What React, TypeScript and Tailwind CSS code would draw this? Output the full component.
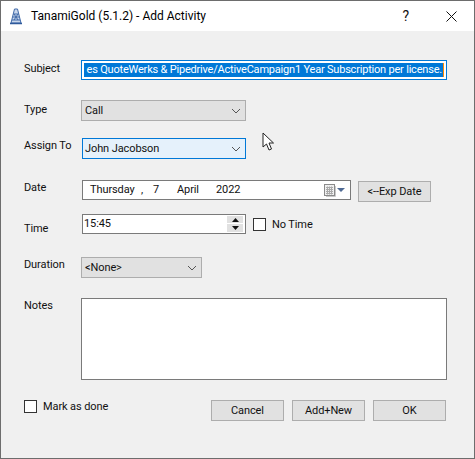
import React from "react";

const Chevron = () => (
  <svg width="10" height="6" viewBox="0 0 10 6" className="shrink-0">
    <path d="M1 1 L5 5 L9 1" fill="none" stroke="#555" strokeWidth="1" />
  </svg>
);

const Label = ({ children, pt }: { children: React.ReactNode; pt: string }) => (
  <div className={`w-[57px] shrink-0 leading-[16px] text-[#111] ${pt}`}>{children}</div>
);

const Btn = ({ children }: { children: React.ReactNode }) => (
  <div className="flex h-[21px] w-[73px] items-center justify-center border border-[#adadad] bg-[#e1e1e1] pt-[2px] text-[#111]">
    {children}
  </div>
);

const Check = () => <div className="h-[13px] w-[13px] shrink-0 border border-[#333] bg-white" />;

export default function App() {
  return (
    <div
      className="relative flex h-[459px] w-[475px] flex-col border border-[#6d6d6d] bg-[#f0f0f0] text-[11px] tracking-[-0.1px]"
      style={{ fontFamily: 'Roboto, "Noto Sans", sans-serif' }}
    >
      <div className="flex h-[30px] shrink-0 items-center bg-white pl-[9px] tracking-normal">
        <svg width="12" height="17" viewBox="0 0 12 17" className="shrink-0">
          <path d="M4.5 1 H7.5 L11 15 H1 Z" fill="#c9d7ec" stroke="#3f69a8" strokeWidth="1" />
          <path d="M3.5 6 H8.5 M2.8 9 H9.2 M2 12 H10 M4 6 L8 12 M8 6 L4 12" stroke="#3f69a8" strokeWidth="1" fill="none" />
          <path d="M0 15.5 H12" stroke="#2f5a9c" strokeWidth="1.5" />
        </svg>
        <span className="ml-[9px] text-[12px] text-black">TanamiGold (5.1.2) - Add Activity</span>
        <span className="ml-auto mr-[37px] text-[14px] leading-none text-[#111]">?</span>
        <svg width="11" height="11" viewBox="0 0 11 11" className="mr-[17px] shrink-0">
          <path d="M0.5 0.5 L10.5 10.5 M10.5 0.5 L0.5 10.5" stroke="#111" strokeWidth="1" />
        </svg>
      </div>

      <div className="flex flex-1 flex-col pl-[23px]">
        <div className="mt-[29px] flex">
          <Label pt="pt-[1px]">Subject</Label>
          <div className="flex h-[20px] w-[366px] items-center overflow-hidden border border-[#0078d7] bg-white pl-[2px] pr-[2px]">
            <div className="flex h-[14px] w-full items-center justify-end overflow-hidden bg-[#0078d7] leading-[14px] tracking-[-0.2px] whitespace-nowrap text-white">
              <span>es QuoteWerks &amp; Pipedrive/ActiveCampaign1 Year Subscription per license.</span>
              <span className="ml-[1px] h-[14px] w-[1px] shrink-0 bg-[#ff8a00]" />
            </div>
          </div>
        </div>

        <div className="mt-[20px] flex">
          <Label pt="pt-[2px]">Type</Label>
          <div className="flex h-[21px] w-[165px] items-center justify-between border border-[#adadad] bg-[#e1e1e1] pl-[3px] pr-[4px] text-[#111]">
            <span className="pt-[2px]">Call</span>
            <Chevron />
          </div>
        </div>

        <div className="mt-[17px] flex">
          <Label pt="pt-0">Assign To</Label>
          <div className="ml-[1px] flex h-[21px] w-[164px] items-center justify-between border border-[#0078d7] bg-[#e5f1fb] pl-[2px] pr-[4px] text-[#111]">
            <span className="pt-[2px]">John Jacobson</span>
            <Chevron />
          </div>
        </div>

        <div className="mt-[21px] flex">
          <Label pt="pt-0">Date</Label>
          <div className="ml-[1px] flex h-[20px] w-[269px] items-center border border-[#7a7a7a] bg-white pl-[7px] pr-[5px] text-[#111]">
            <span className="w-[51px]">Thursday</span>
            <span className="w-[12px]">,</span>
            <span className="w-[24px]">7</span>
            <span className="w-[39px]">April</span>
            <span>2022</span>
            <svg width="21" height="13" viewBox="0 0 21 13" className="ml-auto shrink-0">
              <rect x="0.5" y="0.5" width="10" height="11" fill="#efefef" stroke="#8a8a8a" />
              <path d="M11.5 2 V12.5 H2" fill="none" stroke="#c9c9c9" />
              <path d="M2 3.5 H9 M2 5.5 H9 M2 7.5 H9 M2 9.5 H9 M3.5 2.5 V10.5 M5.5 2.5 V10.5 M7.5 2.5 V10.5" stroke="#a9a9a9" strokeWidth="1" />
              <path d="M13 4 H21 L17 8 Z" fill="#4f6a94" />
            </svg>
          </div>
          <div className="ml-[7px] mt-[1px] flex h-[21px] w-[73px] items-center justify-center border border-[#adadad] bg-[#e1e1e1] pt-[2px] text-[#111]">
            &lt;--Exp Date
          </div>
        </div>

        <div className="mt-[12px] flex">
          <Label pt="pt-[7px]">Time</Label>
          <div className="ml-[1px] flex h-[20px] w-[164px] items-center justify-between border border-[#7a7a7a] bg-white pl-[1px] pr-[2px] text-[#111]">
            <span>15:45</span>
            <div className="flex h-[16px] w-[16px] flex-col gap-[1px]">
              <div className="flex h-[7px] items-center justify-center bg-[#e1e1e1]">
                <svg width="7" height="4" viewBox="0 0 7 4"><path d="M3.5 0 L7 4 H0 Z" fill="#111" /></svg>
              </div>
              <div className="flex h-[8px] items-center justify-center bg-[#e1e1e1]">
                <svg width="7" height="4" viewBox="0 0 7 4"><path d="M0 0 H7 L3.5 4 Z" fill="#111" /></svg>
              </div>
            </div>
          </div>
          <div className="ml-[7px] mt-[4px] flex items-start">
            <Check />
            <span className="ml-[6px] mt-[-1px] leading-[16px] text-[#111]">No Time</span>
          </div>
        </div>

        <div className="mt-[20px] flex">
          <Label pt="pt-0">Duration</Label>
          <div className="flex h-[21px] w-[121px] items-center justify-between border border-[#adadad] bg-[#e1e1e1] pl-[3px] pr-[4px] text-[#111]">
            <span className="pt-[2px]">&lt;None&gt;</span>
            <Chevron />
          </div>
        </div>

        <div className="mt-[20px] flex">
          <Label pt="pt-0">Notes</Label>
          <div className="h-[82px] w-[366px] border border-[#7a7a7a] bg-white" />
        </div>

        <div className="mt-[20px] flex items-start">
          <Check />
          <span className="ml-[6px] mt-[-1px] leading-[16px] text-[#111]">Mark as done</span>
          <div className="ml-auto mr-[28px] flex gap-[8px]">
            <Btn>Cancel</Btn>
            <Btn>Add+New</Btn>
            <Btn>OK</Btn>
          </div>
        </div>
      </div>

      <svg width="14" height="20" viewBox="0 0 14 20" className="absolute left-[261px] top-[131px]">
        <path d="M1 1 V15 L4.5 12 L7 18 L9.5 17 L7 11 H11.5 Z" fill="#fff" stroke="#222" strokeWidth="1" />
      </svg>
    </div>
  );
}
